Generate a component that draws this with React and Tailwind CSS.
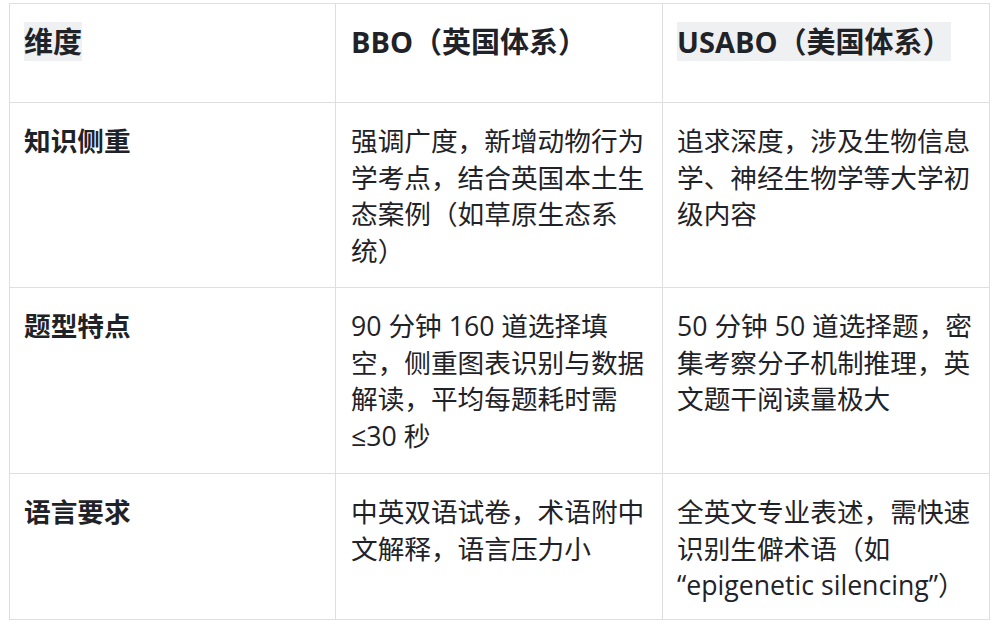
export default function App() {
  const font = { fontFamily: '"Open Sans", "Noto Sans CJK SC", sans-serif' };
  const rows = [
    {
      h: "h-[185px]",
      k: "知识侧重",
      a: "强调广度，新增动物行为学考点，结合英国本土生态案例（如草原生态系统）",
      b: "追求深度，涉及生物信息学、神经生物学等大学初级内容",
    },
    {
      h: "h-[186px]",
      k: "题型特点",
      a: "90 分钟 160 道选择填空，侧重图表识别与数据解读，平均每题耗时需≤30 秒",
      b: "50 分钟 50 道选择题，密集考察分子机制推理，英文题干阅读量极大",
    },
    {
      h: "h-[146px]",
      k: "语言要求",
      a: "中英双语试卷，术语附中文解释，语言压力小",
      b: "全英文专业表述，需快速识别生僻术语（如 “epigenetic silencing”）",
    },
  ];
  return (
    <div className="w-[997px] h-[625px] bg-white text-[#1f2328] pt-[3px] pl-[9px]" style={font}>
      <table className="border-collapse table-fixed w-[981px]">
        <colgroup>
          <col className="w-[326px]" />
          <col className="w-[327px]" />
          <col className="w-[327px]" />
        </colgroup>
        <thead>
          <tr className="h-[99px]">
            <th className="border border-[#dfdfdf] align-top text-left font-bold text-[29px] leading-[37px] px-[14px] pt-[19px]">
              <span className="bg-[#eff0f2]">维度</span>
            </th>
            <th className="border border-[#dfdfdf] align-top text-left font-bold text-[29px] leading-[37px] px-[15px] pt-[19px]">
              BBO（英国体系）
            </th>
            <th className="border border-[#dfdfdf] align-top text-left font-bold text-[29px] leading-[37px] px-[14px] pt-[19px]">
              <span className="bg-[#eff0f2]">USABO（美国体系）</span>
            </th>
          </tr>
        </thead>
        <tbody>
          {rows.map((r) => (
            <tr key={r.k} className={r.h}>
              <td className="border border-[#dfdfdf] align-top font-bold text-[26.67px] leading-[36.67px] px-[14px] pt-[20px]">
                {r.k}
              </td>
              <td className="border border-[#dfdfdf] align-top text-[26.67px] leading-[36.67px] px-[15px] pt-[20px]">
                {r.a}
              </td>
              <td className="border border-[#dfdfdf] align-top text-[26.67px] leading-[36.67px] px-[14px] pt-[20px]">
                {r.b}
              </td>
            </tr>
          ))}
        </tbody>
      </table>
    </div>
  );
}
